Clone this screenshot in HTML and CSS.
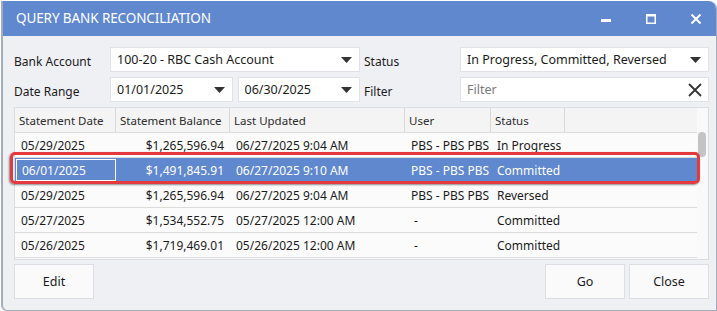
FILE: index.html
```html
<!DOCTYPE html>
<html lang="en">
<head>
  <meta charset="UTF-8">
  <title>Query Bank Reconciliation</title>
  <link rel="stylesheet" href="styles.css">
</head>
<body>
<div class="window">

  <div class="titlebar">
    <span class="title">QUERY BANK RECONCILIATION</span>
    <div class="caption">
      <svg class="cap-btn" width="12" height="12" viewBox="0 0 12 12"><rect x="1" y="6" width="10" height="3" fill="#fff"/></svg>
      <svg class="cap-btn" width="12" height="12" viewBox="0 0 12 12"><path d="M1.75 1.75h8.5v8.5h-8.5z" fill="none" stroke="#fff" stroke-width="1.5"/><rect x="1" y="1" width="10" height="2.5" fill="#fff"/></svg>
      <svg class="cap-btn" width="12" height="12" viewBox="0 0 12 12"><path d="M1.5 1.5l9 9M10.5 1.5l-9 9" stroke="#fff" stroke-width="2"/></svg>
    </div>
  </div>

  <div class="content">

    <div class="filters">
      <span class="label">Bank Account</span>
      <div class="field combo">
        <span>100-20 - RBC Cash Account</span>
        <svg class="arrow" width="11" height="6" viewBox="0 0 11 6"><path d="M0 0h11L5.5 6z" fill="#333"/></svg>
      </div>
      <span class="label label-right">Status</span>
      <div class="field combo">
        <span>In Progress, Committed, Reversed</span>
        <svg class="arrow" width="11" height="6" viewBox="0 0 11 6"><path d="M0 0h11L5.5 6z" fill="#333"/></svg>
      </div>

      <span class="label">Date Range</span>
      <div class="dates">
        <div class="field combo">
          <span>01/01/2025</span>
          <svg class="arrow" width="11" height="6" viewBox="0 0 11 6"><path d="M0 0h11L5.5 6z" fill="#333"/></svg>
        </div>
        <div class="field combo">
          <span>06/30/2025</span>
          <svg class="arrow" width="11" height="6" viewBox="0 0 11 6"><path d="M0 0h11L5.5 6z" fill="#333"/></svg>
        </div>
      </div>
      <span class="label label-right">Filter</span>
      <div class="field combo">
        <span class="placeholder">Filter</span>
        <svg class="clear" width="14" height="14" viewBox="0 0 14 14"><path d="M1 1l12 12M13 1L1 13" stroke="#333" stroke-width="1.8"/></svg>
      </div>
    </div>

    <div class="grid">
      <div class="grid-body">
        <div class="row head">
          <div class="cell c-date">Statement Date</div>
          <div class="cell c-bal">Statement Balance</div>
          <div class="cell c-upd">Last Updated</div>
          <div class="cell c-user">User</div>
          <div class="cell c-stat">Status</div>
        </div>
        <div class="row">
          <div class="cell c-date">05/29/2025</div>
          <div class="cell c-bal num">$1,265,596.94</div>
          <div class="cell c-upd">06/27/2025 9:04 AM</div>
          <div class="cell c-user">PBS - PBS PBS</div>
          <div class="cell c-stat">In Progress</div>
        </div>
        <div class="row selected">
          <div class="cell c-date"><span class="focus">06/01/2025</span></div>
          <div class="cell c-bal num">$1,491,845.91</div>
          <div class="cell c-upd">06/27/2025 9:10 AM</div>
          <div class="cell c-user">PBS - PBS PBS</div>
          <div class="cell c-stat">Committed</div>
        </div>
        <div class="row">
          <div class="cell c-date">05/29/2025</div>
          <div class="cell c-bal num">$1,265,596.94</div>
          <div class="cell c-upd">06/27/2025 9:04 AM</div>
          <div class="cell c-user">PBS - PBS PBS</div>
          <div class="cell c-stat">Reversed</div>
        </div>
        <div class="row">
          <div class="cell c-date">05/27/2025</div>
          <div class="cell c-bal num">$1,534,552.75</div>
          <div class="cell c-upd">05/27/2025 12:00 AM</div>
          <div class="cell c-user dash">-</div>
          <div class="cell c-stat">Committed</div>
        </div>
        <div class="row">
          <div class="cell c-date">05/26/2025</div>
          <div class="cell c-bal num">$1,719,469.01</div>
          <div class="cell c-upd">05/26/2025 12:00 AM</div>
          <div class="cell c-user dash">-</div>
          <div class="cell c-stat">Committed</div>
        </div>
      </div>
      <div class="scrollbar"><div class="thumb"></div></div>
    </div>

    <div class="actions">
      <button class="btn">Edit</button>
      <span class="spacer"></span>
      <button class="btn">Go</button>
      <button class="btn">Close</button>
    </div>

  </div>

  <div class="highlight"></div>
</div>
</body>
</html>
```

FILE: styles.css
```css
body {
  margin: 0;
  background: #fff;
  font-family: "Noto Sans", sans-serif;
  font-size: 12px;
  color: #1b1b1b;
}

.window {
  position: relative;
  width: 713px;
  margin: 1px 0 0 1px;
  background: #eff0f4;
  border-left: 2px solid #a3acb7;
  border-bottom: 1px solid #a3acb7;
  border-right: 1px solid #a3acb7;
  border-radius: 0 8px 0 6px;
}

.titlebar {
  display: flex;
  align-items: center;
  height: 35px;
  padding-left: 13px;
  background: #5f88cf;
  border-radius: 0 8px 0 0;
  color: #fff;
}

.title {
  flex: 1;
  font-size: 13.5px;
  letter-spacing: -0.1px;
  padding-bottom: 1px;
}

.caption {
  display: flex;
  align-items: center;
  gap: 33px;
  padding-right: 14px;
}

.cap-btn {
  display: block;
}

.content {
  display: flex;
  flex-direction: column;
  padding: 11px 7px 11px 11px;
}

.filters {
  display: grid;
  grid-template-columns: 96px 250px 100px 249px;
  grid-template-rows: 25px 25px;
  row-gap: 5px;
}

.label {
  display: flex;
  align-items: center;
  padding-top: 4px;
}

.label-right {
  padding-left: 4px;
}

.field {
  display: flex;
  align-items: center;
  background: #fff;
  border: 1px solid #e0e2e7;
  padding: 0 7px 0 6px;
  font-size: 12.5px;
  min-width: 0;
}

.combo span {
  flex: 1;
  white-space: nowrap;
  overflow: hidden;
}

.placeholder {
  color: #7a7a7a;
}

.arrow, .clear {
  flex: none;
}

.clear {
  margin-right: -1px;
}

.dates {
  display: flex;
  gap: 5px;
}

.dates .field {
  flex: 1;
}

.grid {
  display: flex;
  height: 153px;
  margin-top: 5px;
  background: #fbfbfb;
  border: 1px solid #d9dce1;
  box-sizing: border-box;
}

.grid-body {
  flex: 1;
}

.row {
  display: flex;
  height: 25px;
  border-bottom: 1px solid #dcdcdc;
  box-sizing: border-box;
  font-size: 12px;
}

.row.head {
  background: #f4f4f4;
  font-size: 11.5px;
  color: #2b2b2b;
}

.cell {
  display: flex;
  align-items: center;
  padding: 0 6px;
  box-sizing: border-box;
  white-space: nowrap;
}

.head .cell {
  padding: 0 4px;
  border-right: 1px solid #d8d8d8;
}

.c-date { width: 101px; }
.c-bal  { width: 114px; }
.c-upd  { width: 175px; }
.c-user { width: 86px; }
.c-stat { width: 74px; }

.num {
  justify-content: flex-end;
}

.dash {
  padding-left: 9px;
}

.row.selected {
  background: #5f88cf;
  color: #fff;
}

.selected .c-date {
  padding: 1px 0 1px 1px;
  align-items: stretch;
}

.focus {
  flex: 1;
  display: flex;
  align-items: center;
  padding-left: 5px;
  border: 1px solid #fff;
}

.scrollbar {
  width: 11px;
  background: #f9f9f9;
  padding: 24px 0 0 1px;
  box-sizing: border-box;
}

.thumb {
  width: 8px;
  height: 25px;
  border-radius: 4px;
  background: #c4c4c4;
}

.actions {
  display: flex;
  gap: 4px;
  margin-top: 4px;
}

.spacer {
  flex: 1;
}

.btn {
  width: 80px;
  height: 35px;
  background: #fafafa;
  border: 1px solid #dcdee3;
  font-family: inherit;
  font-size: 12.5px;
  color: #1b1b1b;
  padding: 0;
}

.highlight {
  position: absolute;
  left: 7px;
  top: 151px;
  width: 690px;
  height: 32px;
  box-sizing: border-box;
  border: 3px solid #e43a3e;
  border-radius: 5px;
  box-shadow: -1px 1px 2px rgba(0, 0, 0, 0.45);
  pointer-events: none;
}
```
